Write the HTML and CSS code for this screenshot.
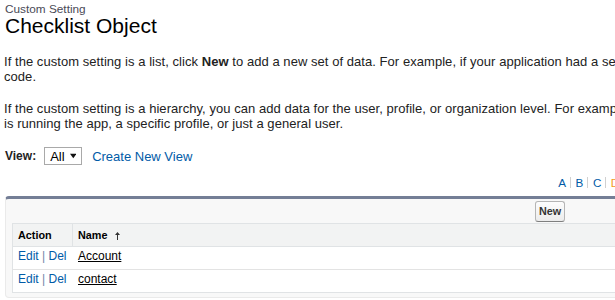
FILE: index.html
```html
<!DOCTYPE html>
<html lang="en">
<head>
    <meta charset="UTF-8">
    <meta name="viewport" content="width=device-width, initial-scale=1.0">
    <title>Checklist Object ~ Custom Setting</title>
    <link rel="stylesheet" href="styles.css">
</head>
<body>
    <div class="page-title">
        <div class="page-type">Custom Setting</div>
        <h1 class="page-name">Checklist Object</h1>
    </div>

    <div class="intro">
        <p>If the custom setting is a list, click <strong>New</strong> to add a new set of data. For example, if your application had a setting for country codes, each set might include the country's name and dialing code.</p>
        <p>If the custom setting is a hierarchy, you can add data for the user, profile, or organization level. For example, you may want different values to display depending on whether a specific user is running the app, a specific profile, or just a general user.</p>
    </div>

    <div class="view-bar">
        <span class="view-label">View:</span>
        <div class="view-select">
            <span>All</span>
            <svg width="7" height="6" viewBox="0 0 7 6"><path d="M0 0.5 H7 L3.5 5.5 Z" fill="#111"/></svg>
        </div>
        <a class="view-link" href="#">Create New View</a>
    </div>

    <div class="rolodex">
        <a href="#">A</a><a href="#">B</a><a href="#">C</a><a href="#" class="current">D</a><a href="#">E</a><a href="#">F</a><a href="#">G</a><a href="#">H</a><a href="#">I</a><a href="#">J</a><a href="#">K</a><a href="#">L</a><a href="#">M</a><a href="#">N</a><a href="#">O</a><a href="#">P</a><a href="#">Q</a><a href="#">R</a><a href="#">S</a><a href="#">T</a><a href="#">U</a><a href="#">V</a><a href="#">W</a><a href="#">X</a><a href="#">Y</a><a href="#">Z</a><a href="#">Other</a><a href="#">All</a>
    </div>

    <div class="list-block">
        <div class="list-buttons">
            <button class="btn" type="button">New</button>
        </div>
        <table class="list">
            <tr>
                <th class="action-col">Action</th>
                <th>Name <svg class="sort-arrow" width="5" height="8" viewBox="0 0 5 8"><path d="M2.5 0 L5 3 H3 V8 H2 V3 H0 Z" fill="#333"/></svg></th>
            </tr>
            <tr>
                <td class="action-col"><a class="action-link" href="#">Edit</a> <span class="pipe">|</span> <a class="action-link" href="#">Del</a></td>
                <td><a class="record-link" href="#">Account</a></td>
            </tr>
            <tr>
                <td class="action-col"><a class="action-link" href="#">Edit</a> <span class="pipe">|</span> <a class="action-link" href="#">Del</a></td>
                <td><a class="record-link" href="#">contact</a></td>
            </tr>
        </table>
    </div>
</body>
</html>
```

FILE: styles.css
```css
html {
    overflow: hidden;
}

body {
    margin: 0;
    width: 1090px;
    padding: 0 5px;
    font-family: "Liberation Sans", Arial, sans-serif;
    color: #222;
    background-color: #fff;
}

a {
    color: #015ba7;
    text-decoration: none;
}

.page-title {
    padding-top: 3px;
}

.page-type {
    font-size: 11.8px;
    line-height: 12px;
    color: #4a4a56;
}

.page-name {
    margin: 0;
    font-size: 21px;
    line-height: 22px;
    font-weight: normal;
    color: #000;
}

.intro {
    width: 1090px;
    margin: 17px 0 16px -1px;
    font-size: 13px;
    line-height: 15px;
    letter-spacing: 0.05px;
}

.intro p {
    margin: 0;
}

.intro p + p {
    margin-top: 17px;
}

.view-bar {
    display: flex;
    align-items: center;
    height: 18px;
}

.view-label {
    font-size: 12px;
    font-weight: bold;
    margin-right: 8px;
}

.view-select {
    display: flex;
    align-items: center;
    gap: 5px;
    box-sizing: border-box;
    width: 38px;
    height: 18px;
    padding: 0 5px;
    border: 1px solid #a9a9a9;
    font-size: 13px;
    color: #000;
}

.view-link {
    margin-left: 10px;
    font-size: 13px;
}

.rolodex {
    display: flex;
    justify-content: flex-end;
    align-items: center;
    height: 15px;
    margin-top: 10px;
    padding-right: 28px;
    font-size: 11.7px;
}

.rolodex a {
    line-height: 11px;
    padding: 0 4px 0 4.5px;
    border-left: 1px solid #d0d0d0;
}

.rolodex a:first-child {
    border-left: none;
}

.rolodex a.current {
    color: #f39a1e;
}

.list-block {
    margin-top: 6px;
    padding: 0 6px 4px;
    border: 1px solid #eaeaea;
    border-top: 3px solid #747e96;
    border-radius: 4px;
    background-color: #f8f8f8;
}

.list-buttons {
    display: flex;
    justify-content: center;
    padding: 2px 0 1px;
}

.btn {
    margin: 0;
    padding: 3px;
    font-family: "Liberation Sans", Arial, sans-serif;
    font-size: 10.8px;
    font-weight: bold;
    line-height: 13px;
    color: #333;
    border: 1px solid #b5b5b5;
    border-bottom-color: #7f7f7f;
    border-radius: 3px;
    background: linear-gradient(#fdfdfd, #ececec);
}

.list {
    width: 100%;
    border-spacing: 0;
    border: 1px solid #e0e3e5;
    background-color: #fff;
    font-size: 12px;
}

.list th {
    padding: 4px 5px;
    font-size: 10.8px;
    line-height: 14px;
    font-weight: bold;
    text-align: left;
    color: #000;
    background-color: #f2f3f3;
    border-bottom: 1px solid #e0e3e5;
}

.list th + th {
    border-left: 1px solid #e0e3e5;
}

.list td {
    padding: 2px 5px 5px;
    line-height: 15px;
    border-bottom: 1px solid #e3e3e3;
}

.list tr:last-child td {
    border-bottom: none;
}

.list td + td {
    padding-left: 6px;
}

.action-col {
    width: 49px;
}

.sort-arrow {
    margin-left: 5px;
    vertical-align: -1px;
}

.pipe {
    color: #6f87a8;
}

.record-link {
    color: #000;
    text-decoration: underline;
}
```
